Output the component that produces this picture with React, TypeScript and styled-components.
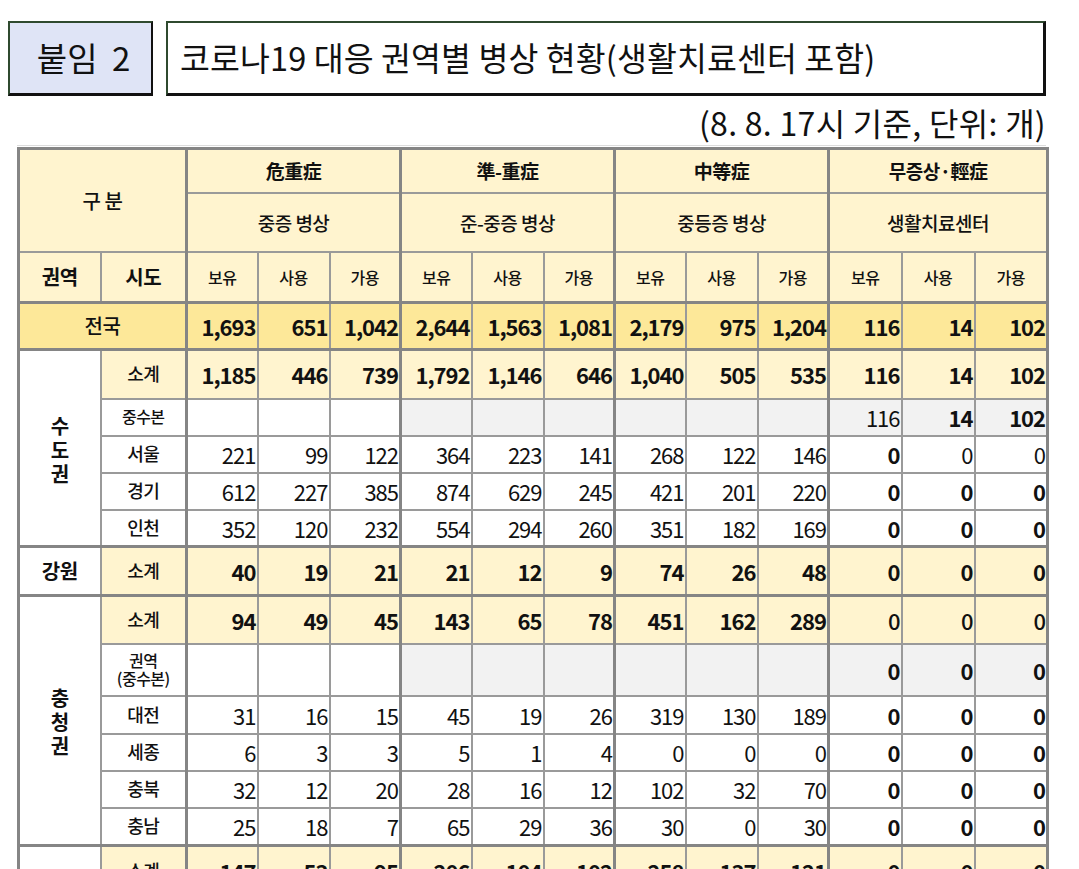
import React from "react";
import styled, { createGlobalStyle, css } from "styled-components";

const GlobalStyle = createGlobalStyle`
  html, body { margin: 0; padding: 0; background: #ffffff; }
  body { font-family: "Noto Sans CJK KR", "Noto Sans", sans-serif; color: #111; }
`;

const Page = styled.div`
  padding: 21px 33px 0 8px;
  display: flex;
  flex-direction: column;
`;

const TitleBar = styled.div`
  display: flex;
  gap: 13px;
  height: 75px;
`;

const AttachBox = styled.div`
  width: 145px;
  box-sizing: border-box;
  background: #dfe4f6;
  border: 2px solid #2f4a2f;
  border-right-color: #111;
  border-bottom: 3px solid #111;
  display: flex;
  align-items: center;
  justify-content: center;
  padding: 0 0 3px 6px;
  font-size: 33px;
  word-spacing: 7px;
`;

const TitleBox = styled.div`
  flex: 1;
  box-sizing: border-box;
  background: #fff;
  border: 2px solid #2f4a2f;
  border-right: 3px solid #111;
  border-bottom: 3px solid #111;
  display: flex;
  align-items: center;
  padding-left: 12px;
  padding-bottom: 4px;
  font-size: 32.5px;
  letter-spacing: 0.1px;
`;

const Unit = styled.div`
  text-align: right;
  font-size: 32px;
  letter-spacing: 0.3px;
  line-height: 50px;
  height: 48px;
  margin-top: 1px;
`;

const TableWrap = styled.div`
  margin-left: 9px;
  border-top: 1px solid #dcdcdc;
  padding-top: 1px;
`;

const Table = styled.table`
  width: 1029px;
  table-layout: fixed;
  border-collapse: collapse;
  border: 3px solid #858585;
`;

type Bg = "white" | "yellow" | "gold" | "gray";
const bgMap: Record<Bg, string> = {
  white: "#ffffff",
  yellow: "#fff4cf",
  gold: "#fde899",
  gray: "#f2f2f2",
};

const cellBase = css<{ $bg?: Bg; $group?: boolean; $topThick?: boolean }>`
  border: 2px solid #9a9a9a;
  padding: 0;
  background: ${(p) => bgMap[p.$bg ?? "white"]};
  ${(p) => p.$group && "border-left: 3px solid #858585;"}
  ${(p) => p.$topThick && "border-top: 3px solid #858585;"}
`;

const HeadCell = styled.th<{
  $bg?: Bg;
  $group?: boolean;
  $topThick?: boolean;
  $size?: number;
  $weight?: number;
}>`
  ${cellBase};
  text-align: center;
  vertical-align: middle;
  font-size: ${(p) => p.$size ?? 19}px;
  font-weight: ${(p) => p.$weight ?? 500};
  letter-spacing: -0.5px;
`;

const LabelCell = styled.td<{
  $bg?: Bg;
  $group?: boolean;
  $topThick?: boolean;
  $size?: number;
  $weight?: number;
}>`
  ${cellBase};
  text-align: center;
  vertical-align: middle;
  font-size: ${(p) => p.$size ?? 18}px;
  font-weight: ${(p) => p.$weight ?? 500};
  line-height: 1.1;
  letter-spacing: -0.5px;
`;

const NumCell = styled.td<{
  $bg?: Bg;
  $group?: boolean;
  $topThick?: boolean;
  $weight: number;
}>`
  ${cellBase};
  text-align: right;
  vertical-align: middle;
  padding-right: 1px;
  font-size: 22px;
  letter-spacing: -1px;
  font-weight: ${(p) => p.$weight};
`;

const VerticalLabel = styled.div`
  display: flex;
  flex-direction: column;
  align-items: center;
  padding-top: 3px;
  font-size: 20px;
  font-weight: 700;
  line-height: 24px;
`;

const Row = styled.tr<{ $h: number }>`
  height: ${(p) => p.$h}px;
`;

type Kind = "sum" | "hq" | "data";
interface DataRow {
  region?: { text: string; span: number; vertical?: boolean };
  sido: React.ReactNode;
  sidoSize?: number;
  kind: Kind;
  v: string[];
  b: string;
  h: number;
  topThick?: boolean;
}

const rows: DataRow[] = [
  {
    region: { text: "수도권", span: 5, vertical: true },
    sido: "소계",
    kind: "sum",
    v: ["1,185", "446", "739", "1,792", "1,146", "646", "1,040", "505", "535", "116", "14", "102"],
    b: "111111111111",
    h: 49,
    topThick: true,
  },
  { sido: "중수본", sidoSize: 16, kind: "hq", v: ["", "", "", "", "", "", "", "", "", "116", "14", "102"], b: "000000000011", h: 37 },
  { sido: "서울", kind: "data", v: ["221", "99", "122", "364", "223", "141", "268", "122", "146", "0", "0", "0"], b: "000000000100", h: 37 },
  { sido: "경기", kind: "data", v: ["612", "227", "385", "874", "629", "245", "421", "201", "220", "0", "0", "0"], b: "000000000111", h: 37 },
  { sido: "인천", kind: "data", v: ["352", "120", "232", "554", "294", "260", "351", "182", "169", "0", "0", "0"], b: "000000000111", h: 37 },
  {
    region: { text: "강원", span: 1 },
    sido: "소계",
    kind: "sum",
    v: ["40", "19", "21", "21", "12", "9", "74", "26", "48", "0", "0", "0"],
    b: "111111111111",
    h: 49,
    topThick: true,
  },
  {
    region: { text: "충청권", span: 6, vertical: true },
    sido: "소계",
    kind: "sum",
    v: ["94", "49", "45", "143", "65", "78", "451", "162", "289", "0", "0", "0"],
    b: "111111111mmm",
    h: 48,
    topThick: true,
  },
  {
    sido: (
      <>
        권역
        <br />
        (중수본)
      </>
    ),
    sidoSize: 16,
    kind: "hq",
    v: ["", "", "", "", "", "", "", "", "", "0", "0", "0"],
    b: "000000000111",
    h: 52,
  },
  { sido: "대전", kind: "data", v: ["31", "16", "15", "45", "19", "26", "319", "130", "189", "0", "0", "0"], b: "000000000111", h: 38 },
  { sido: "세종", kind: "data", v: ["6", "3", "3", "5", "1", "4", "0", "0", "0", "0", "0", "0"], b: "000000000111", h: 37 },
  { sido: "충북", kind: "data", v: ["32", "12", "20", "28", "16", "12", "102", "32", "70", "0", "0", "0"], b: "000000000111", h: 37 },
  { sido: "충남", kind: "data", v: ["25", "18", "7", "65", "29", "36", "30", "0", "30", "0", "0", "0"], b: "000000000111", h: 38 },
  {
    region: { text: "", span: 1 },
    sido: "소계",
    kind: "sum",
    v: ["147", "53", "95", "206", "104", "102", "258", "137", "121", "0", "0", "0"],
    b: "111111111111",
    h: 50,
    topThick: true,
  },
];

const groups = [
  { han: "危重症", ko: "중증 병상" },
  { han: "準-重症", ko: "준-중증 병상" },
  { han: "中等症", ko: "중등증 병상" },
  { han: "무증상·輕症", ko: "생활치료센터" },
];

const sub = ["보유", "사용", "가용"];
const colWidths = [82, 86, 71, 72, 71, 71, 72, 71, 71, 72, 71, 73, 73, 73];
const totals = ["1,693", "651", "1,042", "2,644", "1,563", "1,081", "2,179", "975", "1,204", "116", "14", "102"];

const cellBg = (kind: Kind, i: number): Bg => {
  if (kind === "sum") return "yellow";
  if (kind === "hq") return i < 3 ? "white" : "gray";
  return "white";
};

const weightOf = (c: string) => (c === "1" ? 700 : c === "m" ? 500 : 400);

export default function App() {
  return (
    <>
      <GlobalStyle />
      <Page>
        <TitleBar>
          <AttachBox>붙임 2</AttachBox>
          <TitleBox>코로나19 대응 권역별 병상 현황(생활치료센터 포함)</TitleBox>
        </TitleBar>
        <Unit>(8. 8. 17시 기준, 단위: 개)</Unit>
        <TableWrap>
          <Table>
            <colgroup>
              {colWidths.map((w, i) => (
                <col key={i} style={{ width: w }} />
              ))}
            </colgroup>
            <thead>
              <Row $h={44}>
                <HeadCell $bg="yellow" colSpan={2} rowSpan={2} $size={20}>
                  구 분
                </HeadCell>
                {groups.map((g) => (
                  <HeadCell key={g.han} $bg="yellow" colSpan={3} $group $weight={700} $size={19}>
                    {g.han}
                  </HeadCell>
                ))}
              </Row>
              <Row $h={59}>
                {groups.map((g) => (
                  <HeadCell key={g.ko} $bg="yellow" colSpan={3} $group $size={19}>
                    {g.ko}
                  </HeadCell>
                ))}
              </Row>
              <Row $h={51}>
                <HeadCell $bg="yellow" $size={20} $weight={700}>
                  권역
                </HeadCell>
                <HeadCell $bg="yellow" $size={20} $weight={700}>
                  시도
                </HeadCell>
                {groups.map((g) =>
                  sub.map((s, j) => (
                    <HeadCell key={g.han + s} $bg="yellow" $group={j === 0} $size={16}>
                      {s}
                    </HeadCell>
                  ))
                )}
              </Row>
            </thead>
            <tbody>
              <Row $h={47}>
                <LabelCell $bg="gold" colSpan={2} $size={20} $topThick>
                  전국
                </LabelCell>
                {totals.map((t, i) => (
                  <NumCell key={i} $bg="gold" $weight={700} $group={i % 3 === 0} $topThick>
                    {t}
                  </NumCell>
                ))}
              </Row>
              {rows.map((r, ri) => (
                <Row key={ri} $h={r.h}>
                  {r.region && (
                    <LabelCell rowSpan={r.region.span} $size={20} $weight={700} $topThick={r.topThick}>
                      {r.region.vertical ? (
                        <VerticalLabel>
                          {r.region.text.split("").map((c) => (
                            <span key={c}>{c}</span>
                          ))}
                        </VerticalLabel>
                      ) : (
                        r.region.text
                      )}
                    </LabelCell>
                  )}
                  <LabelCell
                    $bg={r.kind === "sum" ? "yellow" : "white"}
                    $size={r.sidoSize ?? 18}
                    $topThick={r.topThick}
                  >
                    {r.sido}
                  </LabelCell>
                  {r.v.map((val, i) => (
                    <NumCell
                      key={i}
                      $bg={cellBg(r.kind, i)}
                      $weight={weightOf(r.b[i])}
                      $group={i % 3 === 0}
                      $topThick={r.topThick}
                    >
                      {val}
                    </NumCell>
                  ))}
                </Row>
              ))}
            </tbody>
          </Table>
        </TableWrap>
      </Page>
    </>
  );
}
